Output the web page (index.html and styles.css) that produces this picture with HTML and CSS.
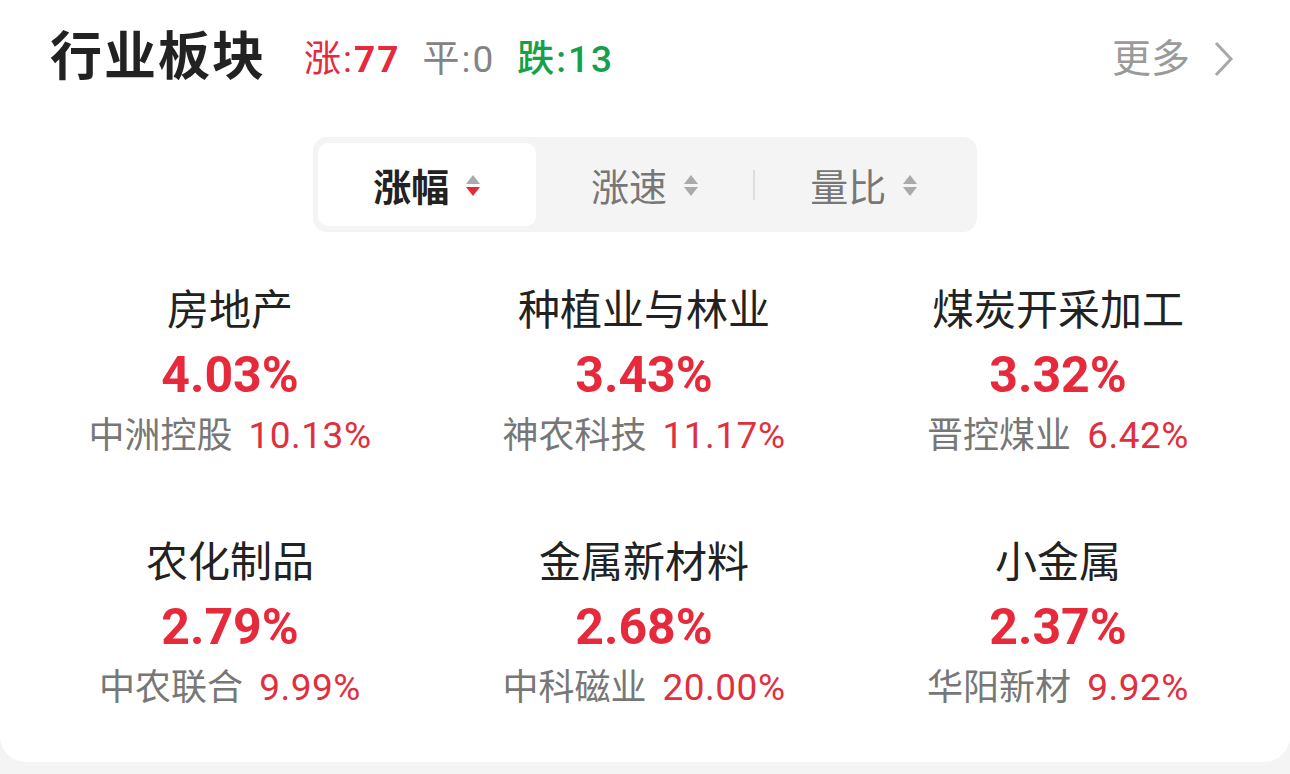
FILE: index.html
```html
<!DOCTYPE html>
<html lang="zh-CN">
<head>
<meta charset="utf-8">
<title>行业板块</title>
<link rel="stylesheet" href="styles.css">
</head>
<body>
<div class="card">
  <div class="header">
    <div class="title">行业板块</div>
    <div class="stats">
      <span class="stat up">涨:<b>77</b></span>
      <span class="stat flat">平:0</span>
      <span class="stat down">跌:13</span>
    </div>
    <div class="more">
      <span>更多</span>
      <svg class="chev" width="20" height="36" viewBox="0 0 20 36"><path d="M2 2 L17 18 L2 34" fill="none" stroke="#a8a8a8" stroke-width="3"/></svg>
    </div>
  </div>

  <div class="seg-wrap">
    <div class="seg">
      <div class="tab active"><span>涨幅</span><span class="sort"><i class="tri-up"></i><i class="tri-down red"></i></span></div>
      <div class="tab"><span>涨速</span><span class="sort"><i class="tri-up"></i><i class="tri-down"></i></span></div>
      <div class="divider"></div>
      <div class="tab"><span>量比</span><span class="sort"><i class="tri-up"></i><i class="tri-down"></i></span></div>
    </div>
  </div>

  <div class="grid">
    <div class="cell"><div class="name">房地产</div><div class="pct">4.03%</div><div class="sub"><span class="stock">中洲控股</span><span class="spct">10.13%</span></div></div>
    <div class="cell"><div class="name">种植业与林业</div><div class="pct">3.43%</div><div class="sub"><span class="stock">神农科技</span><span class="spct">11.17%</span></div></div>
    <div class="cell"><div class="name">煤炭开采加工</div><div class="pct">3.32%</div><div class="sub"><span class="stock">晋控煤业</span><span class="spct">6.42%</span></div></div>
    <div class="cell"><div class="name">农化制品</div><div class="pct">2.79%</div><div class="sub"><span class="stock">中农联合</span><span class="spct">9.99%</span></div></div>
    <div class="cell"><div class="name">金属新材料</div><div class="pct">2.68%</div><div class="sub"><span class="stock">中科磁业</span><span class="spct">20.00%</span></div></div>
    <div class="cell"><div class="name">小金属</div><div class="pct">2.37%</div><div class="sub"><span class="stock">华阳新材</span><span class="spct">9.92%</span></div></div>
  </div>
</div>
</body>
</html>
```

FILE: styles.css
```css
* { box-sizing: border-box; }
html, body {
  margin: 0;
  padding: 0;
  background: #f4f4f4;
  font-family: Roboto, "Noto Sans CJK SC", sans-serif;
}
.card {
  width: 1290px;
  height: 762px;
  background: #ffffff;
  border-radius: 0 0 26px 26px;
  overflow: hidden;
}
.header {
  display: flex;
  align-items: center;
  height: 72px;
  margin-top: 22px;
  padding: 0 56px 0 50px;
}
.title {
  font-size: 52px;
  font-weight: 700;
  color: #222222;
  line-height: 60px;
  letter-spacing: 2px;
}
.stats {
  display: flex;
  gap: 22px;
  margin-left: 38px;
  margin-top: 4px;
}
.stat {
  font-size: 37px;
  line-height: 44px;
  letter-spacing: 2px;
}
.stat b { font-weight: 700; }
.up { color: #e62a3c; }
.flat { color: #838383; }
.down { color: #16a04a; font-weight: 500; }
.more {
  margin-left: auto;
  display: flex;
  align-items: center;
  gap: 24px;
  color: #9a9a9a;
  font-size: 39px;
  line-height: 44px;
  margin-top: 2px;
}
.chev { display: block; }

.seg-wrap {
  display: flex;
  justify-content: center;
  margin-top: 43px;
}
.seg {
  width: 664px;
  height: 95px;
  background: #f4f4f4;
  border-radius: 14px;
  padding: 6px 5px;
  display: flex;
  align-items: center;
}
.tab {
  width: 218px;
  height: 83px;
  display: flex;
  align-items: center;
  justify-content: center;
  gap: 17px;
  font-size: 38px;
  color: #777777;
  border-radius: 10px;
}
.tab.active {
  background: #ffffff;
  color: #222222;
  font-weight: 700;
}
.divider {
  width: 2px;
  height: 30px;
  background: #dddddd;
}
.tab + .divider + .tab { width: 217px; }
.sort {
  display: flex;
  flex-direction: column;
  gap: 3px;
  margin-top: 2px;
}
.tri-up, .tri-down {
  display: block;
  width: 0;
  height: 0;
  border-left: 7px solid transparent;
  border-right: 7px solid transparent;
}
.tri-up { border-bottom: 9px solid #aaaaaa; }
.tri-down { border-top: 9px solid #aaaaaa; }
.tri-down.red { border-top-color: #e62a3c; }

.grid {
  display: grid;
  grid-template-columns: repeat(3, 414px);
  grid-auto-rows: 252px;
  padding: 0 23px;
  margin-top: 38px;
}
.cell {
  display: flex;
  flex-direction: column;
  align-items: center;
  padding-top: 16px;
}
.name {
  font-size: 42px;
  line-height: 50px;
  color: #222222;
}
.pct {
  font-size: 50px;
  line-height: 62px;
  font-weight: 700;
  color: #e62a3c;
  margin-top: 8px;
}
.sub {
  display: flex;
  gap: 16px;
  font-size: 36px;
  line-height: 44px;
  margin-top: 8px;
}
.stock { color: #777777; }
.spct { color: #e0303f; font-size: 37px; letter-spacing: 0.5px; }
```
